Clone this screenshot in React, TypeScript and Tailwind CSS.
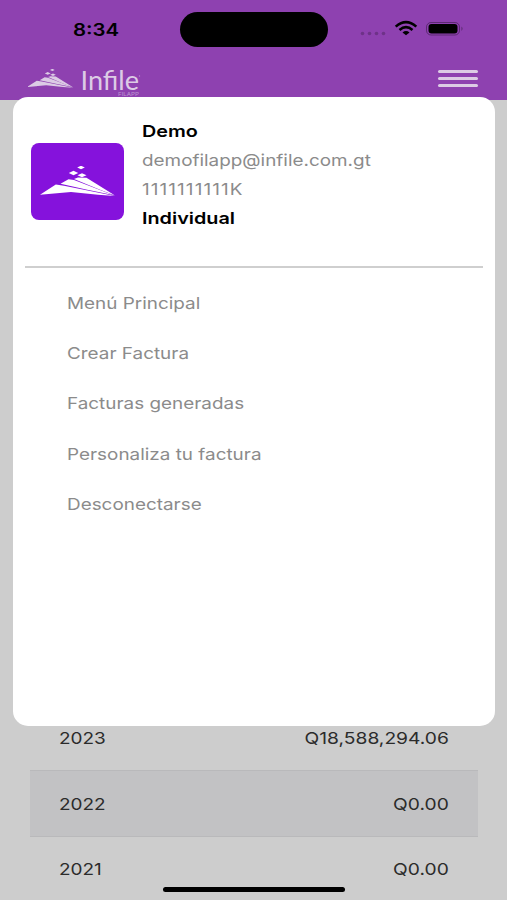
const menuItems = [
    "Menú Principal",
    "Crear Factura",
    "Facturas generadas",
    "Personaliza tu factura",
    "Desconectarse",
];

function InfileMark({ className }: { className: string }) {
    return (
        <svg viewBox="0 0 76 32" preserveAspectRatio="none" className={className} fill="currentColor">
            <path d="M0 28.700 L15.800 18.600 L24 19.800 L75 30 L58 28.700 L31 26 Z" />
            <path d="M20.500 17.800 L28.500 13.200 L34 14 L73 28.900 L45 23.200 Z" />
            <path d="M34 12.900 L38 11.500 L46.500 11.800 L75 29.500 L60 23.800 Z" />
            <path d="M41 -0.300 L44.800 1.500 L41 3.300 L37.200 1.500 Z" />
            <path d="M33.500 4.800 L38.200 7 L33.500 9.200 L28.800 7 Z" />
            <path d="M42 7.200 L46.500 9.300 L42 11.200 L37.500 9.300 Z" />
        </svg>
    );
}

function StatusBar() {
    return (
        <div className="flex h-[60px] items-start">
            <div className="w-[180px] pt-[18px] pl-[73px]">
                <span className="inline-block origin-left scale-x-[1.2] text-[17px] leading-[24px] font-semibold text-black">8:34</span>
            </div>
            <div className="mt-3 h-[35px] w-[148px] rounded-[18px] bg-black" />
            <svg width="106" height="20" viewBox="0 0 106 20" className="mt-[18px] ml-[31px]">
                <g fill="#000" opacity="0.22">
                    <circle cx="3.500" cy="15.500" r="1.800" />
                    <circle cx="10.500" cy="15.500" r="1.800" />
                    <circle cx="17.500" cy="15.500" r="1.800" />
                    <circle cx="24.500" cy="15.500" r="1.800" />
                </g>
                <g fill="none" stroke="#000" strokeWidth="2.600">
                    <path d="M36.700 8.600 Q47 -0.500 57.300 8.600" />
                    <path d="M40.500 12 Q47 6.300 53.500 12" />
                </g>
                <path d="M43.500 14.400 Q47 11.700 50.500 14.400 L47 17.300 Z" />
                <rect x="67.500" y="4.500" width="33" height="12.500" rx="4.500" fill="none" stroke="#000" strokeOpacity="0.35" />
                <rect x="69.500" y="6" width="29" height="9.500" rx="3" />
                <path d="M102.500 8.500 Q104.500 10.700 102.500 13 Z" opacity="0.4" />
            </svg>
        </div>
    );
}

function Header() {
    return (
        <header className="h-[100px] bg-[#8e41b0]">
            <StatusBar />
            <div className="flex items-start justify-between pr-[29px] pl-[27px] text-[#dccbe5]">
                <div className="flex">
                    <InfileMark className="mt-[9px] h-5 w-[47px]" />
                    <svg width="66" height="40" viewBox="0 0 66 40" className="ml-1 overflow-visible">
                        <text x="2.500" y="29.500" fontSize="27.500" textLength="58.500" lengthAdjust="spacingAndGlyphs" fill="currentColor" className="font-['Lato',sans-serif]">Infile</text>
                        <circle cx="61.500" cy="16" r="0.700" fill="currentColor" opacity="0.5" />
                        <text x="40" y="35.500" fontSize="5" textLength="21" lengthAdjust="spacingAndGlyphs" fill="currentColor" opacity="0.6">FILAPP</text>
                    </svg>
                </div>
                <div className="mt-[10px] flex w-10 flex-col gap-1">
                    <span className="h-[3px] rounded-full bg-current" />
                    <span className="h-[3px] rounded-full bg-current" />
                    <span className="h-[3px] rounded-full bg-current" />
                </div>
            </div>
        </header>
    );
}

function YearRow({ year, total, className }: { year: string; total: string; className: string }) {
    return (
        <div className={`flex items-center justify-between px-[29px] ${className}`}>
            <span className="origin-left scale-x-[1.15]">{year}</span>
            <span className="origin-right scale-x-[1.165]">{total}</span>
        </div>
    );
}

export default function App() {
    return (
        <div className="relative flex h-[900px] w-[507px] flex-col overflow-hidden bg-[#cdcdcd] font-['Inter',sans-serif]">
            <Header />
            <main className="mt-auto -mb-px pr-[29px] pl-[30px] text-[16.5px] text-[#2b2b2b]">
                <YearRow year="2023" total="Q18,588,294.06" className="h-[65px] pt-[2px]" />
                <YearRow year="2022" total="Q0.00" className="h-[67px] border-y border-[#b9b9bb] bg-[#c2c2c4] pt-px" />
                <YearRow year="2021" total="Q0.00" className="h-[64px]" />
            </main>

            {/* home indicator */}
            <div className="absolute bottom-[8px] left-[163px] h-[5px] w-[182px] rounded-full bg-black" />

            <aside className="absolute top-[97px] left-[13px] h-[629px] w-[482px] rounded-[15px] bg-white px-3 text-[16.5px] text-[#8b8b8b]">
                <div className="flex h-[171px] border-b-2 border-[#cfcfcf] pl-[6px]">
                    <div className="mt-[46px] flex h-[77px] w-[93px] justify-center rounded-[8px] bg-[#8512dc]">
                        <InfileMark className="mt-[23px] h-[32px] w-[76px] text-white" />
                    </div>
                    <div className="mt-[20px] ml-[18px] flex flex-col items-start leading-[29px]">
                        <strong className="origin-left scale-x-[1.2] font-semibold text-black">Demo</strong>
                        <span className="origin-left scale-x-[1.145]">demofilapp@infile.com.gt</span>
                        <span className="origin-left scale-x-[1.145] tracking-[0.95px]">1111111111K</span>
                        <strong className="origin-left scale-x-[1.2] font-semibold text-black">Individual</strong>
                    </div>
                </div>
                <nav className="flex flex-col items-start pt-[10px] pl-[42px]">
                    {menuItems.map((item) => (
                        <a key={item} href="#" className="origin-left scale-x-[1.145] leading-[50.2px]">
                            {item}
                        </a>
                    ))}
                </nav>
            </aside>
        </div>
    );
}
